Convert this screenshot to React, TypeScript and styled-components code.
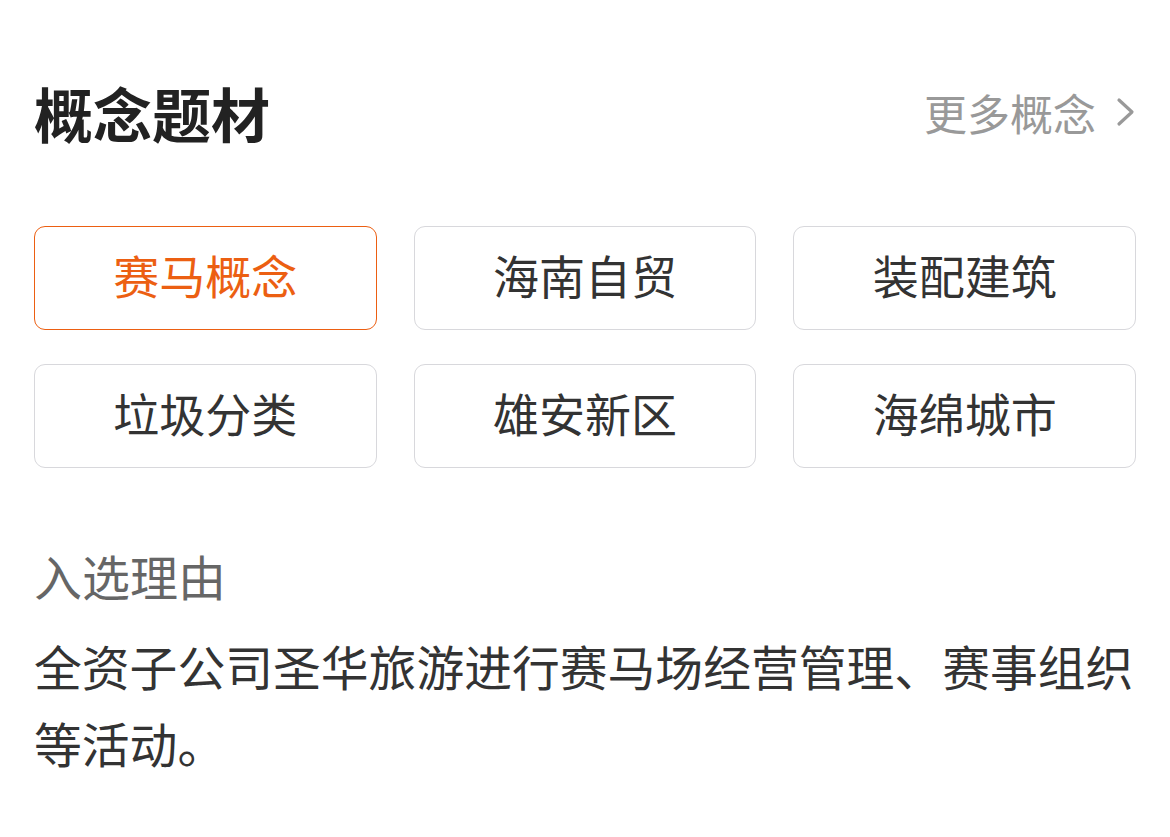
import styled, { createGlobalStyle } from "styled-components";

const GlobalStyle = createGlobalStyle`
  body {
    margin: 0;
    background: #fff;
    font-family: "Noto Sans CJK SC", "Noto Sans", sans-serif;
  }
`;

const Page = styled.div`
  padding: 63px 34px 0;
`;

const Header = styled.div`
  display: flex;
  align-items: center;
  justify-content: space-between;
  height: 98px;
`;

const Title = styled.h1`
  margin: 0;
  font-size: 59px;
  font-weight: 700;
  color: #222;
  line-height: 1;
`;

const More = styled.a`
  display: flex;
  align-items: center;
  gap: 20px;
  font-size: 43px;
  color: #999;
  line-height: 1;
`;

const TagGrid = styled.div`
  display: grid;
  grid-template-columns: repeat(3, 1fr);
  column-gap: 37px;
  row-gap: 34px;
  margin-top: 65px;
`;

const Tag = styled.div<{ $active?: boolean }>`
  display: flex;
  align-items: center;
  justify-content: center;
  height: 104px;
  padding-bottom: 8px;
  box-sizing: border-box;
  border: 1.5px solid ${(p) => (p.$active ? "#ec5f12" : "#d8d8dc")};
  border-radius: 11px;
  font-size: 46px;
  color: ${(p) => (p.$active ? "#ec5f12" : "#333")};
`;

const Label = styled.div`
  margin-top: 79px;
  font-size: 48px;
  color: #666;
  line-height: 1.2;
`;

const Reason = styled.p`
  margin: 22px 0 0;
  font-size: 47.8px;
  color: #333;
  line-height: 77px;
`;

const tags = ["赛马概念", "海南自贸", "装配建筑", "垃圾分类", "雄安新区", "海绵城市"];

const Chevron = () => (
  <svg width="20" height="30" viewBox="0 0 20 30" fill="none">
    <path
      d="M3 3 L16 15 L3 27"
      stroke="#999"
      strokeWidth="3.2"
      strokeLinecap="round"
      strokeLinejoin="round"
    />
  </svg>
);

const App = () => {
  return (
    <Page>
      <GlobalStyle />
      <Header>
        <Title>概念题材</Title>
        <More>
          更多概念
          <Chevron />
        </More>
      </Header>
      <TagGrid>
        {tags.map((t, i) => (
          <Tag key={t} $active={i === 0}>
            {t}
          </Tag>
        ))}
      </TagGrid>
      <Label>入选理由</Label>
      <Reason>全资子公司圣华旅游进行赛马场经营管理、赛事组织等活动。</Reason>
    </Page>
  );
};

export default App;
